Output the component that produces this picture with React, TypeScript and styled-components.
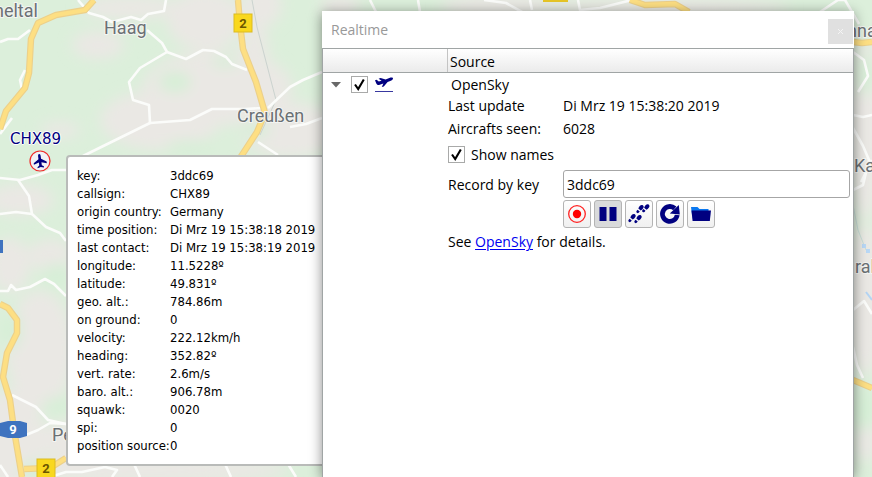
import React, { useState } from 'react';
import styled, { createGlobalStyle } from 'styled-components';

const GlobalStyle = createGlobalStyle`
  *, *::before, *::after { box-sizing: border-box; }
  body {
    margin: 0;
    background: #e6ebe2;
    color: #000;
    font-family: "Open Sans", "Noto Sans", sans-serif;
    font-size: 14px;
  }
`;

const navy = '#000080';

const Page = styled.main`
  position: relative;
  min-height: 100vh;
  overflow: hidden;
`;

const MapCanvas = styled.svg`
  position: absolute;
  inset: 0;
  width: 100%;
  height: 100%;
  text {
    font-family: Roboto, sans-serif;
    font-size: 18px;
  }
`;

const Place = styled.text`
  fill: #6b7074;
  stroke: #f4f5f2;
  stroke-width: 2px;
  paint-order: stroke;
`;

const ShieldText = styled.text<{ $light?: boolean }>`
  && {
    font-size: 13px;
    font-weight: 700;
    fill: ${(p) => (p.$light ? '#fff' : '#6b5600')};
    text-anchor: middle;
  }
`;

const Marker = styled.div`
  position: absolute;
  left: 10px;
  top: 129px;
  display: flex;
  flex-direction: column;
  align-items: flex-start;
`;

const MarkerName = styled.span`
  font: 15px/20px "DejaVu Sans", sans-serif;
  color: ${navy};
  text-shadow: 1px 0 #fff, -1px 0 #fff, 0 1px #fff, 0 -1px #fff;
`;

const MarkerIcon = styled.svg`
  width: 22px;
  height: 22px;
  margin: 1px 0 0 19px;
`;

const Tooltip = styled.section`
  position: absolute;
  left: 66px;
  top: 155px;
  padding: 10px 10px 9px 9px;
  min-width: 280px;
  background: #fff;
  border: 2px solid #b9bbb9;
  border-radius: 4px;
`;

const Facts = styled.table`
  border-collapse: collapse;
  table-layout: fixed;
  width: 260px;
  font: 13px/18px "DejaVu Sans Condensed", "Noto Sans", sans-serif;
  white-space: nowrap;
  th, td {
    padding: 0;
    height: 18px;
    text-align: left;
    font-weight: 400;
  }
  th { width: 93px; }
`;

const Panel = styled.aside`
  position: absolute;
  left: 322px;
  right: 18px;
  top: 11px;
  bottom: 0;
  display: flex;
  flex-direction: column;
  background: #fff;
  box-shadow: 0 2px 12px rgba(0, 0, 0, 0.45);
`;

const TitleBar = styled.header`
  display: flex;
  align-items: center;
  justify-content: space-between;
  height: 37px;
  padding: 0 1px 0 9px;
`;

const Title = styled.h1`
  margin: 0;
  font-size: 14px;
  font-weight: 400;
  color: #999;
`;

const CloseButton = styled.button`
  display: grid;
  place-items: center;
  width: 25px;
  height: 25px;
  margin-top: 4px;
  padding: 0;
  border: 0;
  background: #e0e0e0;
`;

const Tree = styled.div`
  flex: 1;
  border: 1px solid #a0a5a5;
  border-bottom: 0;
`;

const columns = '124px 1fr';

const HeaderRow = styled.div`
  display: grid;
  grid-template-columns: ${columns};
  line-height: 23px;
  background: linear-gradient(#fff, #ebebeb);
  border-bottom: 1px solid #a0a5a5;
`;

const HeaderCell = styled.div`
  padding: 1px 0 0 2px;
  height: 23px;
  & + & { border-left: 1px solid #c4c4c4; }
`;

const TreeBody = styled.div`
  display: grid;
  grid-template-columns: ${columns};
`;

const Branch = styled.div`
  display: flex;
  align-items: center;
  align-self: start;
  height: 23px;
  padding-left: 7px;
`;

const Expander = styled.button`
  display: grid;
  place-items: center;
  width: 12px;
  height: 16px;
  margin-right: 9px;
  padding: 0;
  border: 0;
  background: none;
`;

const Details = styled.div`
  padding: 0 3px 0 1px;
`;

const SourceName = styled.div`
  height: 21px;
  padding-left: 3px;
  line-height: 23px;
`;

const Field = styled.div<{ $height: number }>`
  display: grid;
  grid-template-columns: 115px 1fr;
  align-items: center;
  min-height: ${(p) => p.$height}px;
`;

const CheckLabel = styled.label`
  display: flex;
  align-items: center;
  gap: 6px;
  height: 29px;
`;

const CheckWrap = styled.span`
  display: grid;
  width: 17px;
  height: 17px;
  > * { grid-area: 1 / 1; }
  svg { pointer-events: none; }
`;

const CheckInput = styled.input`
  appearance: none;
  width: 17px;
  height: 17px;
  margin: 0;
  border: 1px solid #a9aaa9;
  background: #fff;
  & + svg { visibility: hidden; }
  &:checked + svg { visibility: visible; }
`;

const DepartureIcon = styled.svg`
  width: 20px;
  height: 18px;
  margin-left: 6px;
`;

const KeyInput = styled.input`
  width: 100%;
  height: 28px;
  padding: 0 3px;
  border: 1px solid #a6a6a6;
  border-radius: 3px;
  color: #000;
  font: inherit;
`;

const Tools = styled.div`
  display: flex;
  gap: 3px;
  margin: 1px 0 0 115px;
`;

const ToolButton = styled.button<{ $pressed?: boolean }>`
  display: grid;
  place-items: center;
  width: 28px;
  height: 28px;
  padding: 0;
  border: 1px solid #b4b4b4;
  border-radius: 3px;
  background: ${(p) => (p.$pressed ? '#d9dadb' : 'linear-gradient(#fff, #f0f0f0)')};
`;

const Note = styled.p`
  margin: 0;
  line-height: 27px;
  a { color: #0000f0; text-underline-offset: 2px; }
`;

function Check({ label, ...rest }: { label?: string } & React.InputHTMLAttributes<HTMLInputElement>) {
  return (
    <CheckWrap>
      <CheckInput type="checkbox" aria-label={label} {...rest} />
      <svg width="17" height="17" viewBox="0 0 17 17" aria-hidden="true">
        <path d="M4 8.5 L7.2 13 L12.8 3.5" fill="none" stroke="#000" strokeWidth="2.1" />
      </svg>
    </CheckWrap>
  );
}

function Shoe({ x, y }: { x: number; y: number }) {
  return (
    <g transform={`translate(${x} ${y}) rotate(40)`}>
      <path d="M-1.6 1 C-2.6 -1.2 -2.2 -4.4 0 -4.4 C2.2 -4.4 2.4 -1.4 1.5 1Z" />
      <path d="M-1.4 2.4 H1.4 C1.6 4.6 1 5.2 0 5.2 C-1 5.2 -1.6 4.6 -1.4 2.4Z" />
    </g>
  );
}

const facts: [string, string][] = [
  ['key:', '3ddc69'],
  ['callsign:', 'CHX89'],
  ['origin country:', 'Germany'],
  ['time position:', 'Di Mrz 19 15:38:18 2019'],
  ['last contact:', 'Di Mrz 19 15:38:19 2019'],
  ['longitude:', '11.5228º'],
  ['latitude:', '49.831º'],
  ['geo. alt.:', '784.86m'],
  ['on ground:', '0'],
  ['velocity:', '222.12km/h'],
  ['heading:', '352.82º'],
  ['vert. rate:', '2.6m/s'],
  ['baro. alt.:', '906.78m'],
  ['squawk:', '0020'],
  ['spi:', '0'],
  ['position source:', '0'],
];

const minorRoads = [
  'M0 42 L8 39 L18 39 L30 30',
  'M78 0 L84 7 L89 13 L103 17 L112 22 L131 17 L141 20 L148 14 L164 11 L166 0',
  'M147 30 L162 43 L167 52 L186 59 L203 50 L214 51 L226 57 L232 64 L247 70',
  'M167 52 L140 68 L129 82 L133 100 L149 105 L150 123 L190 120 L212 109 L245 109 L262 108',
  'M150 123 L83 156',
  'M268 108 L290 87 L303 80 L322 72',
  'M290 127 L306 124 L322 118',
  'M258 142 L278 155',
  'M25 70 L20 80 L23 94',
  'M12 118 L0 134',
  'M0 178 L20 180 L38 175 L52 170 L66 170',
  'M18 180 L29 196 L32 214 L46 227 L60 233 L66 241',
  'M0 214 L16 212 L32 214',
  'M0 291 L8 291 L11 285 L16 290 L30 287 L45 279 L54 284 L66 296',
  'M12 395 L36 407 L48 420 L66 424',
  'M26 435 L38 430 L50 423 L66 424',
  'M0 465 L8 477',
  'M50 477 L66 472 L82 472 L105 467 L117 470 L112 477',
  'M134 464 L140 477 M225 464 L231 477 M288 464 L296 477',
  'M370 0 L376 12 M418 0 L420 12',
  'M484 0 L506 3 L522 12',
  'M530 0 L532 10 M578 0 L580 10 L600 8 L632 0',
  'M820 12 L838 0 L845 0 L859 24',
  'M853 52 L864 60 L868 76 L858 92 M853 115 L863 117 L872 115',
  'M853 128 L863 146 L869 160 L863 185 L853 190 M872 160 L861 182',
  'M872 314 L864 301 L853 310 M853 347 L857 365 L863 378',
];

const mainRoads = [
  'M94 0 L85 10 L56 15 L38 23 L31 39 L29 73 L25 88 L6 111 L0 129',
  'M238 0 L240 24 L243 49 L256 82 L265 113 L257 132 L240 158',
  'M0 304 L8 308 L17 320 L17 333 L7 353 L3 377 L10 400 L14 430 L22 477',
  'M24 469 L50 468 L66 458',
  'M630 0 L645 5 L675 4 L689 12',
  'M853 42 L862 43 L872 42',
  'M853 380 L872 388',
];

const patches: [number, number, number, number][] = [
  [98, 45, 26, 14], [205, 20, 38, 30], [218, 88, 75, 38], [160, 120, 60, 30], [60, 130, 20, 8],
  [255, 60, 14, 45], [290, 130, 50, 28], [262, 5, 20, 22], [130, 8, 50, 12], [20, 200, 34, 16],
  [40, 350, 34, 60], [10, 265, 20, 28], [50, 255, 22, 16], [10, 440, 35, 50], [75, 440, 40, 20],
  [150, 470, 140, 14], [340, 6, 20, 12], [500, 6, 60, 12], [660, 8, 130, 10], [865, 130, 18, 90],
  [865, 300, 20, 76], [866, 440, 12, 22],
];

const greens: [number, number, number, number][] = [
  [175, 82, 16, 10], [225, 62, 14, 5], [255, 130, 15, 7], [190, 146, 24, 5], [56, 275, 10, 12],
  [12, 330, 9, 18], [58, 405, 14, 7], [32, 470, 12, 8], [866, 75, 9, 20], [864, 410, 10, 20],
];

function BaseMap() {
  return (
    <MapCanvas viewBox="0 0 872 477" preserveAspectRatio="xMinYMin slice" role="img" aria-label="Map">
      <defs>
        <filter id="soft" x="-30%" y="-30%" width="160%" height="160%">
          <feGaussianBlur stdDeviation="7" />
        </filter>
      </defs>
      <rect width="872" height="477" fill="#dcefdb" />
      <g filter="url(#soft)">
        {patches.map(([x, y, rx, ry]) => (
          <ellipse key={`${x}-${y}`} cx={x} cy={y} rx={rx} ry={ry} fill="#eae8e4" />
        ))}
        {greens.map(([x, y, rx, ry]) => (
          <ellipse key={`${x}-${y}`} cx={x} cy={y} rx={rx} ry={ry} fill="#d5efd6" />
        ))}
      </g>
      <path d="M252 0 L257 27 L276 100 L260 135" fill="none" stroke="#cbd3cf" />
      <g fill="none" stroke="#fbfcfa" strokeWidth="2.6" strokeLinejoin="round">
        {minorRoads.map((d) => <path key={d} d={d} />)}
      </g>
      <path d="M853 205 L858 230 L866 250" fill="none" stroke="#c9dfd8" />
      <path d="M866 292 L872 300" fill="none" stroke="#b4d4f4" strokeWidth="2" />
      <path d="M862 244 h4 v4 h-4z M866 249 h4 v4 h-4z" fill="#b9d8f6" />
      <g fill="none" strokeLinejoin="round">
        {mainRoads.map((d) => <path key={d} d={d} stroke="#ecd08a" strokeWidth="6.5" />)}
        {mainRoads.map((d) => <path key={`${d} inner`} d={d} stroke="#fddf83" strokeWidth="4.3" />)}
      </g>
      <rect x="234" y="14" width="18" height="18" fill="#f9d81e" stroke="#dcbb22" />
      <ShieldText x="243" y="28">2</ShieldText>
      <rect x="37" y="459" width="18" height="19" fill="#f9d81e" stroke="#dcbb22" />
      <ShieldText x="46" y="473">2</ShieldText>
      <rect x="543" y="-10" width="25" height="12" fill="#e6c526" />
      <path d="M0 423 L8 421 H20 L27 423 V436 L20 438 H8 L0 436Z" fill="#3f73bf" />
      <ShieldText $light x="13" y="434">9</ShieldText>
      <rect x="-3" y="240" width="6" height="13" fill="#3f73bf" />
      <Place x="-6" y="17">neltal</Place>
      <Place x="104" y="34">Haag</Place>
      <Place x="237" y="122">Creußen</Place>
      <Place x="52" y="441">Pe</Place>
      <Place x="847" y="37">nna</Place>
      <Place x="854" y="172">Ka</Place>
      <Place x="855" y="273">ral</Place>
    </MapCanvas>
  );
}

export default function App() {
  const [visible, setVisible] = useState(true);
  const [names, setNames] = useState(true);
  const [recordKey, setRecordKey] = useState('3ddc69');

  return (
    <Page>
      <GlobalStyle />
      <BaseMap />

      <Marker>
        {names && <MarkerName>CHX89</MarkerName>}
        <MarkerIcon viewBox="0 0 22 22" aria-hidden="true">
          <circle cx="11" cy="11" r="10" fill="#f1f2f6" stroke="#f02a2a" strokeWidth="1.2" />
          <path
            transform="rotate(-7 11 11)"
            d="M11 4 C11.9 4 12.3 5 12.3 6 V9 L17.5 12.4 V14 L12.3 12.4 V15.4 L14.2 16.8 V18 L11 17.1 L7.8 18 V16.8 L9.7 15.4 V12.4 L4.5 14 V12.4 L9.7 9 V6 C9.7 5 10.1 4 11 4Z"
            fill={navy}
          />
        </MarkerIcon>
      </Marker>

      <Tooltip aria-label="Aircraft CHX89">
        <Facts>
          <tbody>
            {facts.map(([name, value]) => (
              <tr key={name}>
                <th scope="row">{name}</th>
                <td>{value}</td>
              </tr>
            ))}
          </tbody>
        </Facts>
      </Tooltip>

      <Panel>
        <TitleBar>
          <Title>Realtime</Title>
          <CloseButton type="button" aria-label="Close">
            <svg width="7" height="7" viewBox="0 0 7 7" aria-hidden="true">
              <path d="M1 1 L6 6 M6 1 L1 6" stroke="#f4f4f4" />
            </svg>
          </CloseButton>
        </TitleBar>
        <Tree>
          <HeaderRow>
            <HeaderCell />
            <HeaderCell>Source</HeaderCell>
          </HeaderRow>
          <TreeBody>
            <Branch>
              <Expander type="button" aria-label="Collapse OpenSky" aria-expanded="true">
                <svg width="10" height="6" viewBox="0 0 10 6" aria-hidden="true">
                  <path d="M0 0 H10 L5 5.5Z" fill="#686868" />
                </svg>
              </Expander>
              <Check
                label="Show OpenSky"
                checked={visible}
                onChange={(e) => setVisible(e.target.checked)}
              />
              <DepartureIcon viewBox="0 0 20 18" aria-hidden="true">
                <path
                  d="M1 4.2 L2.6 3.8 L4.8 5.6 L7.6 4.8 L4.6 2.8 L6.6 2 L11.6 3.6 L15.4 2 C17.6 1.2 19.2 1.6 19 2.8 C18.8 3.9 17.2 4.6 15.6 5.2 L13.6 6 L9.8 10.4 L7.8 11 L9.4 7.6 L5 9 C3.6 9.3 2.8 8.4 2.2 7.2Z"
                  fill={navy}
                />
                <path d="M1 15.5 H19" stroke="#3838a0" />
              </DepartureIcon>
            </Branch>
            <Details>
              <SourceName>OpenSky</SourceName>
              <Field $height={23}>
                <span>Last update</span>
                <span>Di Mrz 19 15:38:20 2019</span>
              </Field>
              <Field $height={23}>
                <span>Aircrafts seen:</span>
                <span>6028</span>
              </Field>
              <CheckLabel>
                <Check checked={names} onChange={(e) => setNames(e.target.checked)} />
                Show names
              </CheckLabel>
              <Field $height={30}>
                <label htmlFor="record-key">Record by key</label>
                <KeyInput
                  id="record-key"
                  value={recordKey}
                  onChange={(e) => setRecordKey(e.target.value)}
                />
              </Field>
              <Tools>
                <ToolButton type="button" aria-label="Record">
                  <svg width="20" height="20" viewBox="0 0 20 20" aria-hidden="true">
                    <circle cx="10" cy="10" r="8.3" fill="none" stroke="#f22" strokeWidth="1.3" />
                    <circle cx="10" cy="10" r="4.2" fill="#f00" />
                  </svg>
                </ToolButton>
                <ToolButton type="button" aria-label="Pause" aria-pressed="true" $pressed>
                  <svg width="20" height="20" viewBox="0 0 20 20" aria-hidden="true">
                    <path d="M1.5 3 H8.5 V17 H1.5Z M11.5 3 H18.5 V17 H11.5Z" fill={navy} />
                  </svg>
                </ToolButton>
                <ToolButton type="button" aria-label="Track">
                  <svg width="22" height="22" viewBox="0 0 22 22" fill={navy} aria-hidden="true">
                    <Shoe x={12.2} y={5.8} />
                    <Shoe x={18} y={5} />
                    <Shoe x={4.2} y={14.8} />
                    <Shoe x={10.2} y={15.8} />
                  </svg>
                </ToolButton>
                <ToolButton type="button" aria-label="Reload">
                  <svg width="22" height="22" viewBox="0 0 22 22" aria-hidden="true">
                    <path
                      d="M15.8 5.4 A7.4 7.4 0 1 0 18.2 12"
                      fill="none"
                      stroke={navy}
                      strokeWidth="4.8"
                    />
                    <path d="M19.8 2 L20.8 11.4 L10.8 10.4Z" fill={navy} />
                  </svg>
                </ToolButton>
                <ToolButton type="button" aria-label="Open folder">
                  <svg width="22" height="20" viewBox="0 0 22 20" aria-hidden="true">
                    <path d="M1 3 H7.5 L9.5 5 H18.5 V9 H3 L2.5 15Z" fill="#0a78f0" />
                    <path d="M1.5 6.6 H21 L19.8 17 H2.6Z" fill={navy} />
                  </svg>
                </ToolButton>
              </Tools>
              <Note>
                See <a href="https://opensky-network.org">OpenSky</a> for details.
              </Note>
            </Details>
          </TreeBody>
        </Tree>
      </Panel>
    </Page>
  );
}
